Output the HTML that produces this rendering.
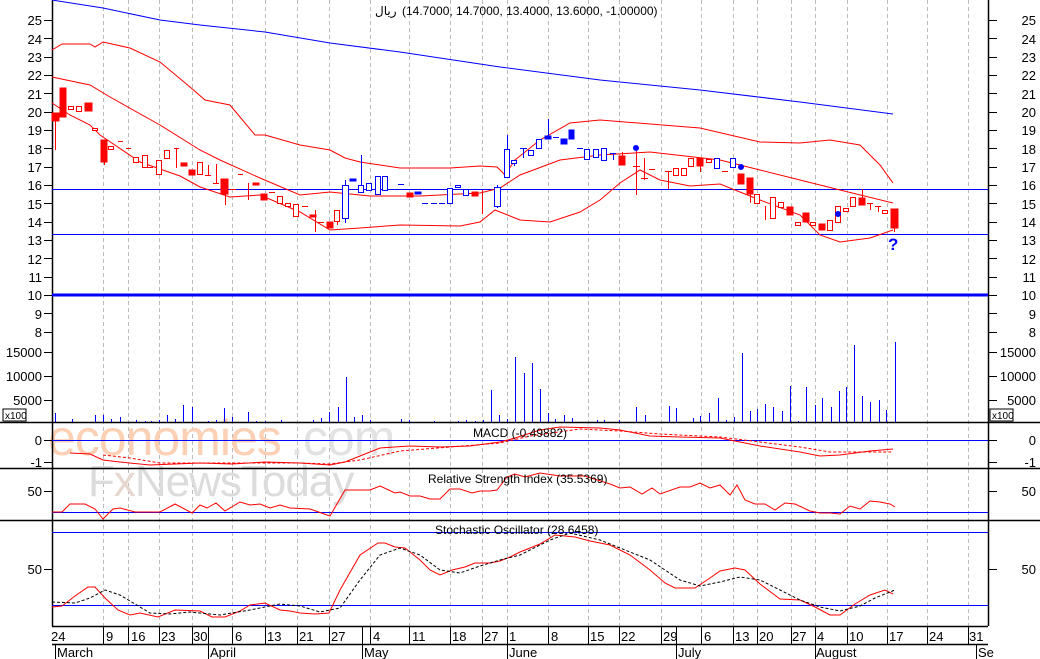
<!DOCTYPE html>
<html><head><meta charset="utf-8"><style>
html,body{margin:0;padding:0;background:#fff;width:1040px;height:659px;overflow:hidden}
svg{display:block;font-family:"Liberation Sans","DejaVu Sans",sans-serif}
</style></head><body>
<svg width="1040" height="659" viewBox="0 0 1040 659" xmlns="http://www.w3.org/2000/svg">
<rect width="1040" height="659" fill="#fff"/>
<g stroke="#bbb" stroke-dasharray="4,3" stroke-width="1">
<path d="M103.5 0V626M128.5 0V626M159.5 0V626M192.5 0V626M232.5 0V626M265.5 0V626M297.5 0V626M329.5 0V626M370.5 0V626M409.5 0V626M450.5 0V626M482.5 0V626M507.5 0V626M548.5 0V626M588.5 0V626M619.5 0V626M661.5 0V626M701.5 0V626M733.5 0V626M757.5 0V626M791.5 0V626M815.5 0V626M847.5 0V626M887.5 0V626M927.5 0V626M968.5 0V626"/>
</g>
<g font-family="Liberation Sans, sans-serif">
<text x="48" y="455" font-size="50" fill="#fbd0b4" letter-spacing="-1">economies</text>
<text x="290" y="455" font-size="50" fill="#e2e2e2" letter-spacing="-1">.com</text>
<text x="88" y="496" font-size="44" fill="#dcdcdc" letter-spacing="-1">F<tspan fill="#e6d8d0">x</tspan>NewsToday</text>
</g>
<g stroke="#000" stroke-width="1.5" fill="none">
<path d="M52.5 0V626M988.5 0V626"/>
<path d="M52 422.5H988M52 468.5H988M0 422.5H52M0 468.5H52M988 422.5H1040M988 468.5H1040M0 520.5H1040M52 626.5H988M52 644.5H988"/>
</g>
<g stroke="#000" stroke-width="1">
<path d="M44 20.5H52M44 38.5H52M44 57.5H52M44 75.5H52M44 93.5H52M44 112.5H52M44 130.5H52M44 148.5H52M44 167.5H52M44 185.5H52M44 203.5H52M44 222.5H52M44 240.5H52M44 258.5H52M44 277.5H52M44 295.5H52M44 313.5H52M44 332.5H52"/>
<path d="M988 20.5H997M988 38.5H997M988 57.5H997M988 75.5H997M988 93.5H997M988 112.5H997M988 130.5H997M988 148.5H997M988 167.5H997M988 185.5H997M988 203.5H997M988 222.5H997M988 240.5H997M988 258.5H997M988 277.5H997M988 295.5H997M988 313.5H997M988 332.5H997"/>
<path d="M44 352.5H52M44 376.5H52M44 400.5H52M988 352.5H997M988 376.5H997M988 400.5H997M44 440.5H52M44 462.5H52M988 440.5H997M988 462.5H997M44 491.5H52M988 491.5H997M44 569.5H52M988 569.5H997"/>
</g>
<g font-size="13" fill="#000" text-anchor="end">
<text x="42" y="25">25</text><text x="42" y="44">24</text><text x="42" y="62">23</text><text x="42" y="80">22</text><text x="42" y="99">21</text><text x="42" y="117">20</text><text x="42" y="135">19</text><text x="42" y="154">18</text><text x="42" y="172">17</text><text x="42" y="190">16</text><text x="42" y="209">15</text><text x="42" y="227">14</text><text x="42" y="245">13</text><text x="42" y="264">12</text><text x="42" y="282">11</text><text x="42" y="300">10</text><text x="42" y="319">9</text><text x="42" y="337">8</text>
<text x="42" y="357">15000</text><text x="42" y="381">10000</text><text x="42" y="405">5000</text>
<text x="42" y="445">0</text><text x="42" y="467">-1</text><text x="42" y="496">50</text><text x="42" y="574">50</text>
<text x="1036" y="25">25</text><text x="1036" y="44">24</text><text x="1036" y="62">23</text><text x="1036" y="80">22</text><text x="1036" y="99">21</text><text x="1036" y="117">20</text><text x="1036" y="135">19</text><text x="1036" y="154">18</text><text x="1036" y="172">17</text><text x="1036" y="190">16</text><text x="1036" y="209">15</text><text x="1036" y="227">14</text><text x="1036" y="245">13</text><text x="1036" y="264">12</text><text x="1036" y="282">11</text><text x="1036" y="300">10</text><text x="1036" y="319">9</text><text x="1036" y="337">8</text>
<text x="1036" y="357">15000</text><text x="1036" y="381">10000</text><text x="1036" y="405">5000</text>
<text x="1036" y="445">0</text><text x="1036" y="467">-1</text><text x="1036" y="496">50</text><text x="1036" y="574">50</text>
</g>
<rect x="3" y="409" width="23" height="12" fill="#fff" stroke="#000"/><text x="5" y="419" font-size="10">x100</text>
<rect x="990" y="409" width="23" height="12" fill="#fff" stroke="#000"/><text x="992" y="419" font-size="10">x100</text>
<g stroke="#0000ff" fill="none">
<path d="M52 189.5H988M52 234.5H988"/>
<path d="M52 295H988" stroke-width="3"/>
<path d="M52 440.5H988M52 512.5H988M52 532.5H988M52 605.5H988"/>
</g>
<polyline fill="none" stroke="#0000ff" points="52,0 103,8 160,20 200,25 265,32 330,43 400,52 500,67 600,80 700,90 800,102 893,114"/>
<g fill="none" stroke="#f00">
<polyline points="52,50 62,44 90,44 95,47 103,42 130,48 160,62 190,87 205,100 230,105 255,135 265,135 300,145 330,150 345,158 360,162 380,165 400,168 450,168 480,166 497,167 505,175 515,160 540,140 570,123 600,120 650,124 700,128 760,142 800,143 830,140 860,145 880,165 893,183"/>
<polyline points="52,77 90,85 110,97 160,125 200,150 220,160 260,178 300,195 330,192 370,196 420,196 480,193 500,188 520,175 560,160 600,155 650,152 720,160 760,170 800,180 840,190 893,203"/>
<polyline points="52,103 70,115 90,125 100,135 140,162 180,176 200,187 230,197 260,195 300,212 330,230 360,228 400,225 460,226 480,222 495,210 520,220 550,222 580,212 600,200 620,183 640,170 660,180 690,186 720,184 760,200 800,215 820,235 840,242 870,238 893,230"/>
</g>
<g stroke="#f00" fill="#f00" stroke-width="1">
<path d="M55.5 120V145M63.5 88V117M104.5 162V165M225.5 194V205M248.5 183V200M337.5 221V225M482.5 190V214M622.5 152V156M636.5 148V195M644.5 158V180M750.5 194V203M765.5 206V220M862.5 189V198M894.5 228V232M668.5 171V189M700.5 166V172"/>
<rect x="52" y="113" width="7" height="8"/><rect x="60" y="88" width="6" height="29"/><rect x="85" y="103" width="7" height="8"/><rect x="101" y="140" width="6" height="22"/>
<rect x="181" y="163" width="6" height="3"/><rect x="189" y="170" width="6" height="5"/><rect x="221" y="179" width="7" height="15"/><rect x="253" y="183" width="6" height="2"/><rect x="261" y="194" width="6" height="6"/><rect x="310" y="215" width="6" height="2"/><rect x="327" y="222" width="6" height="6"/>
<rect x="407" y="193" width="6" height="4"/><rect x="472" y="192" width="6" height="4"/>
<rect x="619" y="156" width="6" height="9"/><rect x="697" y="158" width="6" height="8"/><rect x="738" y="174" width="6" height="10"/><rect x="747" y="178" width="6" height="16"/><rect x="787" y="207" width="6" height="8"/><rect x="803" y="213" width="6" height="9"/><rect x="819" y="224" width="6" height="6"/><rect x="859" y="198" width="6" height="7"/><rect x="891" y="209" width="7" height="19"/>
</g>
<g stroke="#f00" fill="#fff" stroke-width="1">
<rect x="68.5" y="106.5" width="5" height="3"/><rect x="76.5" y="106.5" width="5" height="5"/><rect x="92.5" y="128.5" width="5" height="2"/><rect x="108.5" y="146.5" width="5" height="3"/>
<rect x="133.5" y="157.5" width="5" height="5"/><rect x="142.5" y="155.5" width="5" height="12"/><rect x="156.5" y="160.5" width="5" height="14"/><rect x="164.5" y="150.5" width="5" height="8"/><rect x="197.5" y="162.5" width="5" height="12"/>
<rect x="277.5" y="196.5" width="5" height="7"/><rect x="285.5" y="203.5" width="5" height="3"/><rect x="293.5" y="204.5" width="5" height="12"/><rect x="334.5" y="210.5" width="5" height="11"/>
<rect x="673.5" y="168.5" width="5" height="7"/><rect x="681.5" y="168.5" width="5" height="7"/><rect x="688.5" y="158.5" width="5" height="8"/><rect x="706.5" y="159.5" width="5" height="3"/>
<rect x="754.5" y="194.5" width="5" height="9"/><rect x="770.5" y="197.5" width="5" height="21"/><rect x="778.5" y="202.5" width="5" height="5"/><rect x="795.5" y="222.5" width="5" height="3"/><rect x="810.5" y="222.5" width="5" height="3"/><rect x="827.5" y="220.5" width="5" height="10"/><rect x="835.5" y="206.5" width="5" height="16"/><rect x="843.5" y="208.5" width="5" height="3"/><rect x="850.5" y="197.5" width="5" height="9"/><rect x="882.5" y="210.5" width="5" height="3"/>
</g>
<g stroke="#f00" fill="none">
<path d="M118 141.5H123M126 148.5H131M147 167.5H153M174 148.5H179M176.5 148V168M205 175.5H211M208.5 165V175M213 183.5H219M216.5 164V183M230 189.5H236M238 174.5H243M269 192.5H275M302 206.5H308M318 222.5H324M315.5 210V232M633 166.5H640M641 178.5H648M649 169.5H655M665 171.5H672M722 171.5H728M867 203.5H873M870.5 203V210M875 206.5H881M878.5 206V212M55.5 145V150"/>
</g>
<g stroke="#0000ff" fill="#fff">
<path d="M345.5 180V223M361.5 155V193M497.5 185V208M507.5 135V177M548.5 119V138M514.5 160V166"/>
<rect x="342.5" y="185.5" width="6" height="33"/><rect x="358.5" y="185.5" width="5" height="7"/><rect x="366.5" y="183.5" width="5" height="7"/><rect x="375.5" y="176.5" width="5" height="18"/><rect x="382.5" y="176.5" width="5" height="14"/><rect x="447.5" y="188.5" width="5" height="15"/><rect x="455.5" y="185.5" width="5" height="2"/><rect x="463.5" y="189.5" width="5" height="6"/><rect x="494.5" y="187.5" width="6" height="19"/>
<rect x="504.5" y="149.5" width="5" height="28"/><rect x="511.5" y="160.5" width="5" height="3"/><rect x="528.5" y="150.5" width="5" height="5"/><rect x="536.5" y="139.5" width="5" height="9"/>
<rect x="584.5" y="149.5" width="5" height="10"/><rect x="593.5" y="149.5" width="5" height="8"/><rect x="601.5" y="148.5" width="5" height="12"/><rect x="714.5" y="158.5" width="5" height="10"/><rect x="730.5" y="158.5" width="5" height="9"/>
</g>
<g fill="#0000ff" stroke="#0000ff">
<rect x="350" y="179" width="6" height="2"/><rect x="415" y="192" width="6" height="2"/><rect x="545" y="136" width="6" height="3"/><rect x="561" y="139" width="6" height="5"/><rect x="569" y="130" width="5" height="9"/>
<path d="M398 184.5H404M520 148.5H527M523.5 148V158M553 137.5H559M577 148.5H583M610 153.5H616M613.5 153V160M422 203.5H428M431 203.5H437M439 203.5H445" fill="none"/>
<circle cx="636" cy="148" r="2.5"/><circle cx="741" cy="167" r="2.5"/><circle cx="838" cy="214" r="2.5"/>
</g>
<text x="888" y="250" font-size="17" font-weight="bold" fill="#0000ff">?</text>
<text x="375" y="15" font-size="12" fill="#000">ريال</text>
<text x="402" y="15" font-size="12" fill="#000">(14.7000, 14.7000, 13.4000, 13.6000, -1.00000)</text>
<g stroke="#0000ff" stroke-width="1">
<path d="M55.5 422v-9M72.5 422v-3M95.5 422v-7M103.5 422v-7M111.5 422v-3M120.5 422v-5M136.5 422v-2M145.5 422v-1M151.5 422v-1M159.5 422v-2M167.5 422v-7M175.5 422v-3M183.5 422v-17M192.5 422v-15M208.5 422v-1M216.5 422v-2M224.5 422v-14M232.5 422v-5M248.5 422v-10M256.5 422v-1M265.5 422v-1M281.5 422v-2M313.5 422v-2M321.5 422v-4M329.5 422v-10M338.5 422v-15M346.5 422v-45M354.5 422v-5M362.5 422v-7M370.5 422v-2M401.5 422v-3M409.5 422v-2M434.5 422v-1M458.5 422v-1M466.5 422v-2M475.5 422v-1M483.5 422v-2M491.5 422v-32M499.5 422v-7M507.5 422v-3M515.5 422v-65M524.5 422v-49M532.5 422v-59M540.5 422v-33M548.5 422v-9M555.5 422v-3M564.5 422v-7M572.5 422v-4M597.5 422v-2M604.5 422v-2M619.5 422v-2M636.5 422v-15M645.5 422v-7M669.5 422v-16M676.5 422v-14M693.5 422v-4M700.5 422v-6M709.5 422v-9M718.5 422v-24M726.5 422v-2M734.5 422v-5M742.5 422v-69M750.5 422v-11M757.5 422v-13M765.5 422v-18M773.5 422v-15M782.5 422v-11M790.5 422v-36M798.5 422v-1M806.5 422v-35M815.5 422v-17M822.5 422v-24M831.5 422v-15M839.5 422v-31M846.5 422v-35M854.5 422v-77M862.5 422v-26M870.5 422v-20M879.5 422v-22M886.5 422v-12M895.5 422v-80"/>
</g>
<path d="M52 440.5H988" stroke="#0000ff" stroke-dasharray="10,4"/>
<polyline fill="none" stroke="#f00" points="70,453 90,454 103,460 120,462 150,465 200,463 232,464 265,462 300,463 330,465 345,462 360,456 380,448 410,446 440,447 470,446 500,442 515,438 540,430 560,427 600,428 620,430 650,436 680,437 720,438 760,446 800,452 820,456 840,455 870,451 893,449"/>
<polyline fill="none" stroke="#f00" stroke-dasharray="3,2" points="103,455 130,458 160,463 232,463 300,463 330,464 360,460 400,451 450,447 500,443 530,436 580,429 620,431 660,434 720,437 760,442 800,447 830,452 860,452 893,452"/>
<text x="473" y="437" font-size="12">MACD (-0.49882)</text>
<polyline fill="none" stroke="#f00" points="52,512 62,512 70,504 85,504 95,509 103,519 113,509 120,508 135,512 160,512 175,504 192,513 200,505 207,508 216,503 225,511 240,502 250,505 260,504 270,508 280,505 290,508 310,509 330,516 345,490 370,490 380,486 395,493 400,492 410,496 420,496 430,499 440,499 450,489 460,489 472,493 480,491 490,491 497,490 507,477 515,474 525,477 540,473 560,476 585,476 610,484 620,488 630,487 642,494 652,488 660,494 680,487 690,487 700,483 710,488 720,485 730,495 737,485 745,500 755,504 765,504 775,510 785,503 795,504 810,511 820,513 830,513 840,514 850,506 860,509 870,501 880,502 890,504 895,507"/>
<text x="428" y="483" font-size="12">Relative Strength Index (35.5369)</text>
<polyline fill="none" stroke="#f00" points="52,607 62,606 75,596 88,587 95,587 105,598 118,610 130,615 140,613 158,617 175,610 200,611 212,617 225,617 240,611 250,605 265,603 280,610 290,611 300,613 315,614 329,613 340,590 360,555 378,543 385,543 395,547 405,548 420,560 430,570 440,575 452,570 465,567 475,563 490,563 500,561 510,557 520,552 540,544 555,535 575,537 590,541 610,545 630,555 650,570 665,583 675,588 695,588 710,578 720,571 735,568 745,570 760,584 780,599 800,600 815,607 830,615 840,615 855,604 870,595 885,590 893,594"/>
<polyline fill="none" stroke="#000" stroke-dasharray="3,2" points="52,602 75,603 90,598 105,590 120,595 135,604 150,613 170,614 190,612 220,615 250,610 280,604 300,606 320,612 340,608 360,580 380,555 400,548 420,555 440,570 460,573 480,566 500,560 520,555 550,540 570,533 600,540 620,548 650,560 680,580 700,586 720,582 740,577 760,580 780,590 800,600 820,607 840,611 860,606 875,598 895,590"/>
<text x="435" y="534" font-size="12">Stochastic Oscillator (28.6458)</text>
<g stroke="#000">
<path d="M103.5 626V644M128.5 626V644M159.5 626V644M192.5 626V644M208.5 626V644M232.5 626V644M265.5 626V644M297.5 626V644M329.5 626V644M362.5 626V644M370.5 626V644M409.5 626V644M450.5 626V644M482.5 626V644M507.5 626V644M548.5 626V644M588.5 626V644M619.5 626V644M661.5 626V644M676.5 626V644M701.5 626V644M733.5 626V644M757.5 626V644M791.5 626V644M815.5 626V644M847.5 626V644M887.5 626V644M927.5 626V644M968.5 626V644"/>
<path d="M55.5 644V659M208.5 644V659M362.5 644V659M507.5 644V659M676.5 644V659M815.5 644V659M976.5 644V659"/>
</g>
<g font-size="13">
<text x="51" y="641">24</text><text x="106" y="641">9</text><text x="131" y="641">16</text><text x="161" y="641">23</text><text x="193" y="641">30</text><text x="235" y="641">6</text><text x="267" y="641">13</text><text x="299" y="641">21</text><text x="331" y="641">27</text><text x="373" y="641">4</text><text x="412" y="641">11</text><text x="452" y="641">18</text><text x="484" y="641">27</text><text x="509" y="641">1</text><text x="551" y="641">8</text><text x="590" y="641">15</text><text x="621" y="641">22</text><text x="663" y="641">29</text><text x="704" y="641">6</text><text x="735" y="641">13</text><text x="759" y="641">20</text><text x="792" y="641">27</text><text x="817" y="641">4</text><text x="849" y="641">10</text><text x="889" y="641">17</text><text x="929" y="641">24</text><text x="969" y="641">31</text>
<text x="57" y="657">March</text><text x="210" y="657">April</text><text x="364" y="657">May</text><text x="509" y="657">June</text><text x="678" y="657">July</text><text x="816" y="657">August</text><text x="978" y="657">Se</text>
</g>
</svg>
</body></html>
